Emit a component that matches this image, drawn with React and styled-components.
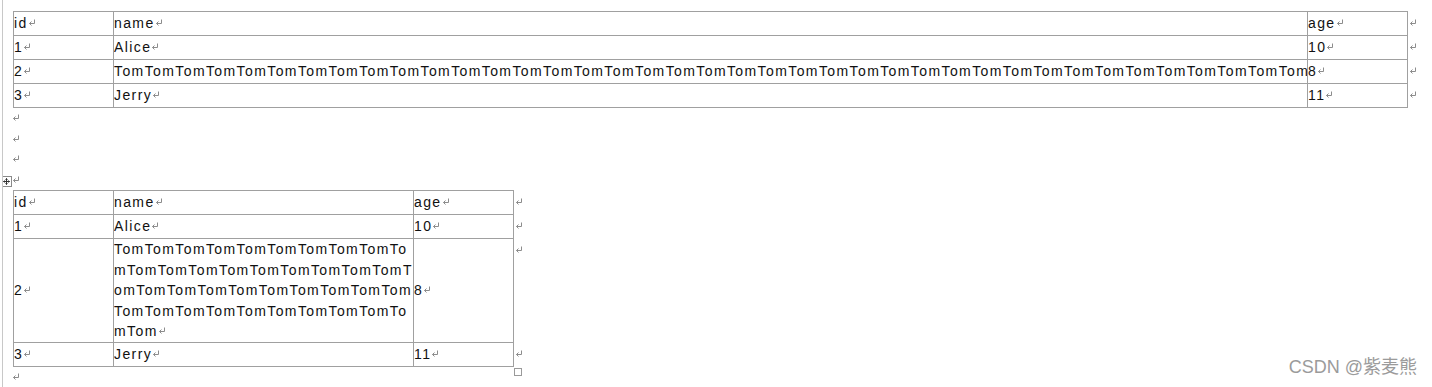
import React from "react";
import styled, { createGlobalStyle } from "styled-components";

const GlobalStyle = createGlobalStyle`
  html, body { margin: 0; padding: 0; background: #ffffff; }
  #root { width: 1432px; }
`;

const Page = styled.div`
  position: relative;
  box-sizing: border-box;
  margin-left: 2px;
  border-left: 1px solid #c8c8c8;
  height: 387px;
  overflow: hidden;
  padding: 11px 0 0 10px;
  font-family: "Liberation Sans", Arial, sans-serif;
  font-size: 14px;
  letter-spacing: 1.4px;
  color: #111;
`;

const Table = styled.table`
  border-collapse: separate;
  border-spacing: 0;
  table-layout: fixed;
  width: ${(p) => p.$width}px;
`;

const Row = styled.tr`
  height: ${(p) => p.$h}px;
`;

const Cell = styled.td`
  box-sizing: border-box;
  padding: 0;
  line-height: 20.6px;
  vertical-align: middle;
  border-right: 1px solid #a0a0a0;
  border-bottom: 1px solid #a0a0a0;
  border-left: ${(p) => (p.$first ? "1px solid #a0a0a0" : "none")};
  border-top: ${(p) => (p.$top ? "1px solid #a0a0a0" : "none")};
  white-space: ${(p) => (p.$nowrap ? "nowrap" : "normal")};
  overflow: hidden;
  word-break: ${(p) => (p.$breakAll ? "break-all" : "normal")};
`;

const EndCell = styled.td`
  padding: ${(p) => (p.$top ? "2px" : "1px")} 0 0 1px;
  line-height: 20.6px;
  vertical-align: top;
  border: none;
`;

const MarkSvg = styled.svg`
  display: inline-block;
  vertical-align: 2px;
`;

const Para = styled.div`
  height: 20.5px;
  line-height: 20.5px;
  margin-left: -1px;
`;

const TableWrap = styled.div`
  position: relative;
  width: max-content;
`;

const MoveHandle = styled.svg`
  position: absolute;
  left: -12px;
  top: -14px;
`;

const EndSquare = styled.div`
  position: absolute;
  left: 501px;
  top: 178px;
  width: 8px;
  height: 8px;
  box-sizing: border-box;
  border: 1px solid #9a9a9a;
  background: #fff;
`;

const Watermark = styled.div`
  position: absolute;
  right: 15px;
  bottom: 11px;
  font-family: "Liberation Sans", "Noto Sans CJK SC", sans-serif;
  font-size: 18px;
  line-height: 18px;
  letter-spacing: 0;
  color: #9b9b9b;
  white-space: nowrap;
`;

const Mark = () => (
  <MarkSvg width="8" height="7" viewBox="0 0 8 7">
    <path d="M6.5 0.5V4.5H1.5" fill="none" stroke="#8c8c8c" strokeWidth="1" />
    <path d="M3.5 2.5L1.5 4.5L3.5 6.5" fill="none" stroke="#8c8c8c" strokeWidth="1" />
  </MarkSvg>
);

const rows = [
  { id: "id", name: "name", age: "age" },
  { id: "1", name: "Alice", age: "10" },
  { id: "2", name: "Tom".repeat(40), age: "8", tall: true },
  { id: "3", name: "Jerry", age: "11" },
];

function DataTable({ widths, wide }) {
  const total = widths.reduce((a, b) => a + b, 0) + 25;
  return (
    <Table $width={total}>
      <colgroup>
        {widths.map((w, i) => (
          <col key={i} style={{ width: w }} />
        ))}
        <col style={{ width: 25 }} />
      </colgroup>
      <tbody>
        {rows.map((r, i) => {
          const top = i === 0;
          const h = (r.tall && !wide ? 104 : 24) + (top ? 1 : 0);
          const nameText = wide && r.tall ? "Tom".repeat(39) : r.name;
          return (
            <Row key={i} $h={h}>
              <Cell $first $top={top}>
                {r.id}
                <Mark />
              </Cell>
              <Cell $top={top} $nowrap={wide} $breakAll={!wide}>
                {nameText}
                {!(wide && r.tall) && <Mark />}
              </Cell>
              <Cell $top={top}>
                {r.age}
                <Mark />
              </Cell>
              <EndCell $top={top}>
                <Mark />
              </EndCell>
            </Row>
          );
        })}
      </tbody>
    </Table>
  );
}

export default function App() {
  return (
    <>
      <GlobalStyle />
      <Page>
        <DataTable widths={[101, 1194, 100]} wide />
        <Para><Mark /></Para>
        <Para><Mark /></Para>
        <Para><Mark /></Para>
        <Para><Mark /></Para>
        <TableWrap>
          <MoveHandle width="11" height="11" viewBox="0 0 11 11">
            <rect x="0.5" y="0.5" width="10" height="10" fill="#fff" stroke="#8a8a8a" />
            <path d="M5.5 2.5V8.5M2.5 5.5H8.5" stroke="#333" strokeWidth="1" />
            <path d="M4.5 3.5L5.5 2.5L6.5 3.5M4.5 7.5L5.5 8.5L6.5 7.5M3.5 4.5L2.5 5.5L3.5 6.5M7.5 4.5L8.5 5.5L7.5 6.5" fill="none" stroke="#333" strokeWidth="1" />
          </MoveHandle>
          <DataTable widths={[101, 300, 100]} />
          <EndSquare />
        </TableWrap>
        <Para><Mark /></Para>
        <Watermark>CSDN @紫麦熊</Watermark>
      </Page>
    </>
  );
}
